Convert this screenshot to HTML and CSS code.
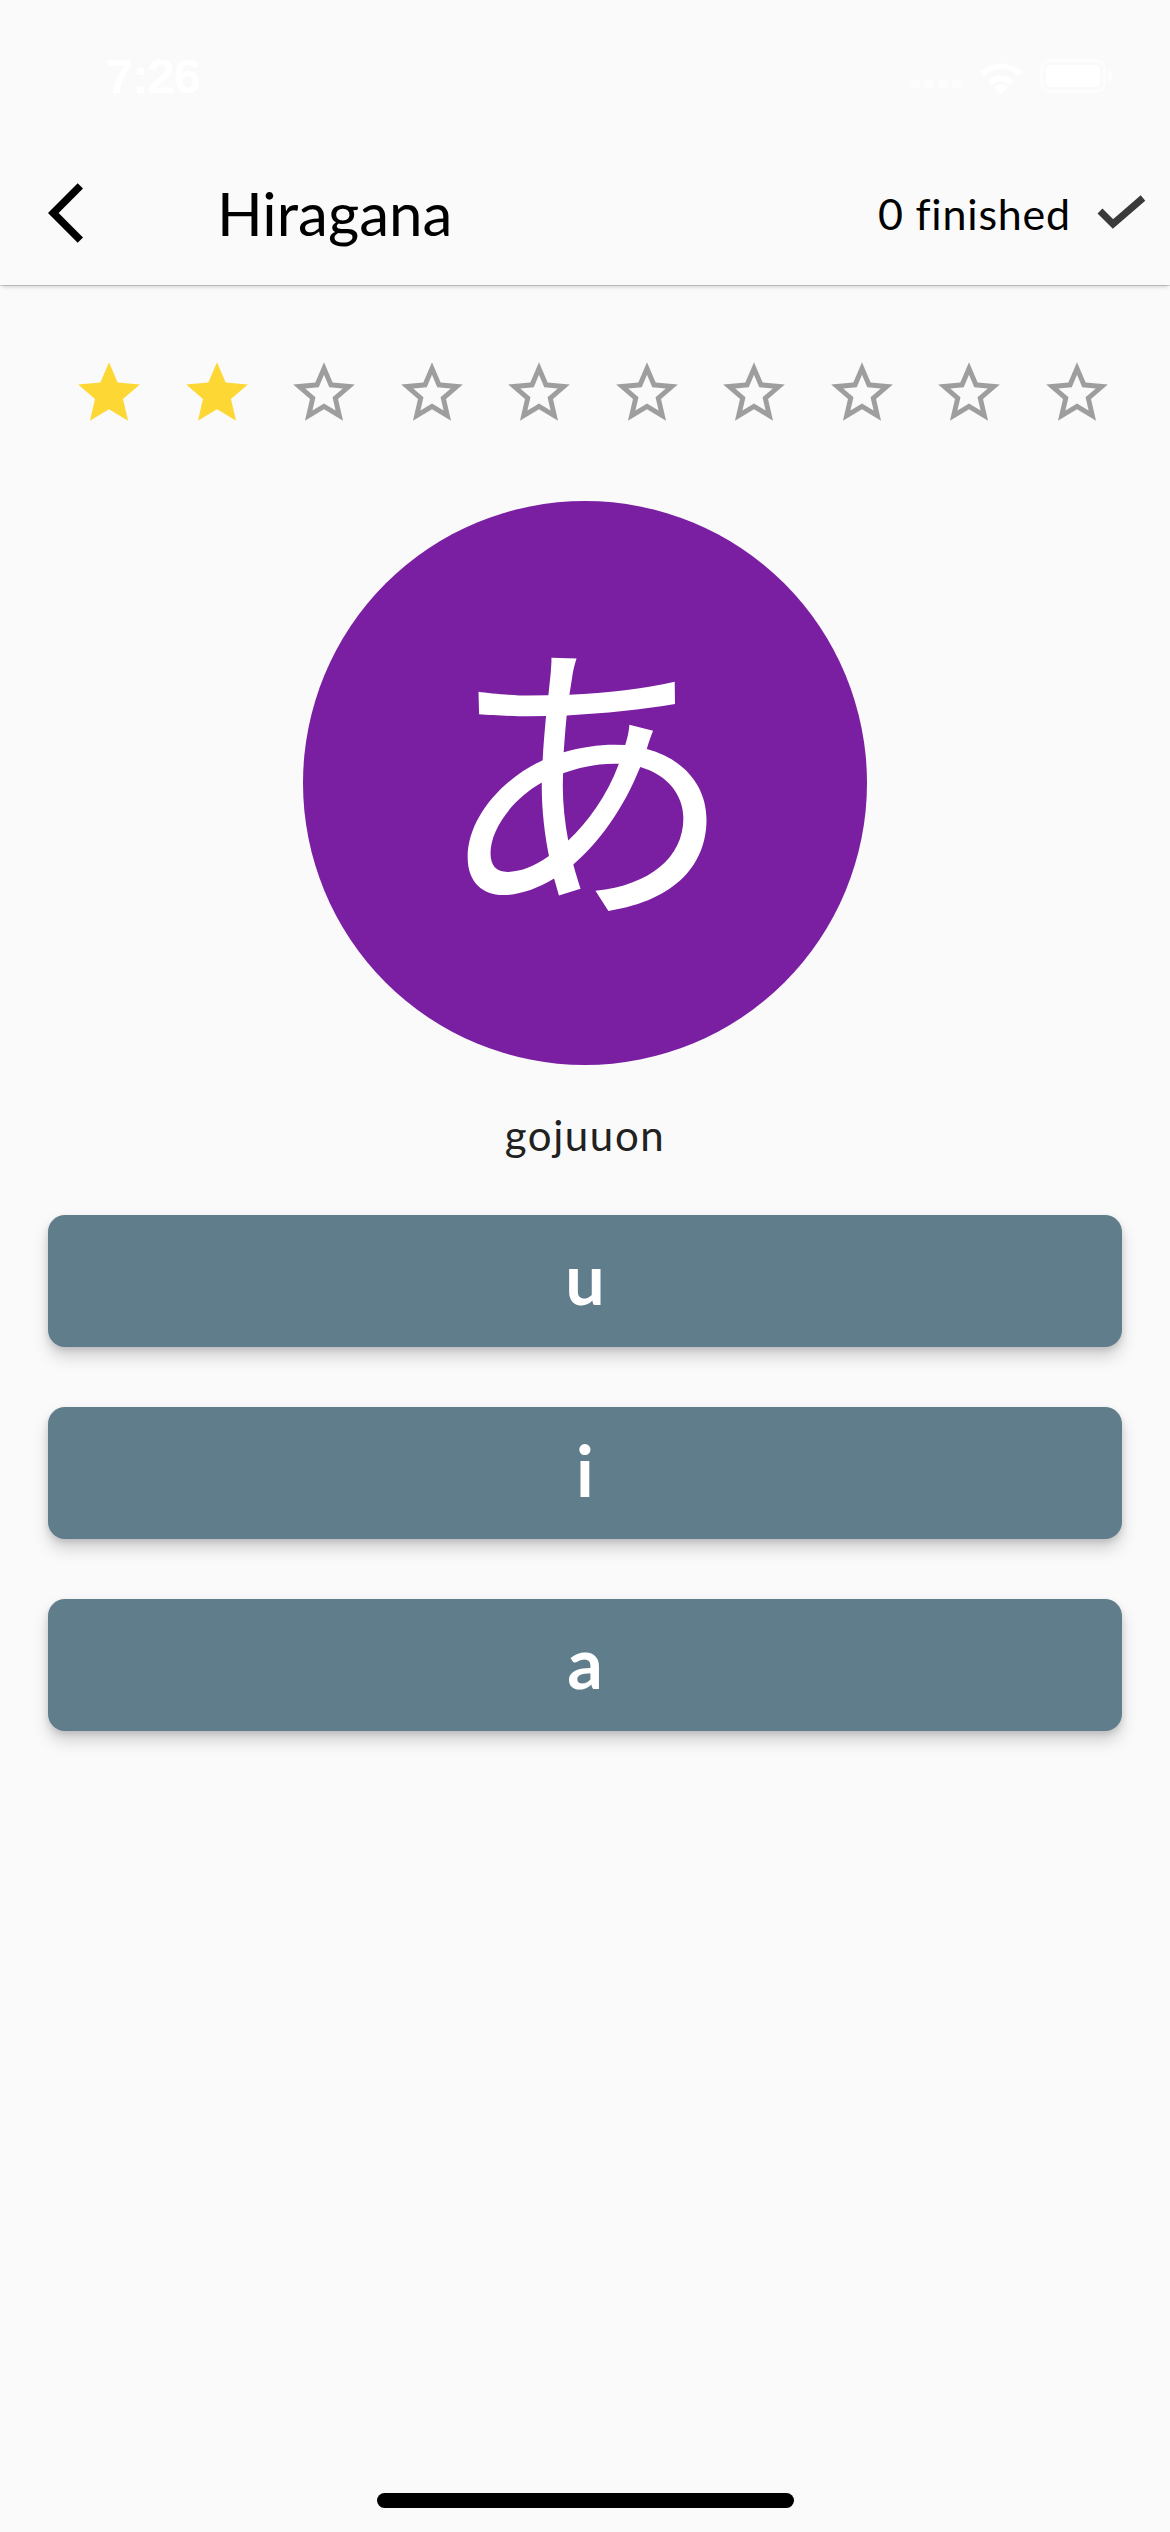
FILE: index.html
```html
<!DOCTYPE html>
<html lang="en">
<head>
<meta charset="utf-8">
<title>Hiragana</title>
<link rel="stylesheet" href="styles.css">
</head>
<body>
<div class="screen">
  <div class="statusbar">
    <span class="time">7:26</span>
    <div class="status-icons">
      <span class="signal"><i></i><i></i><i></i><i></i></span>
      <svg class="wifi" viewBox="0 0 50 36" width="50" height="36">
        <path d="M25 36 L18 29 A10 10 0 0 1 32 29 Z" fill="#fff"/>
        <path d="M12 23 A18 18 0 0 1 38 23 L34 27 A13 13 0 0 0 16 27 Z" fill="#fff"/>
        <path d="M4 14 A30 30 0 0 1 46 14 L42 18 A24 24 0 0 0 8 18 Z" fill="#fff"/>
      </svg>
      <span class="battery"><span class="battery-fill"></span></span>
      <span class="battery-cap"></span>
    </div>
  </div>

  <header class="appbar">
    <svg class="back" viewBox="0 0 24 24" width="72" height="72"><path d="M11.67 3.87L9.9 2.1 0 12l9.9 9.9 1.77-1.77L3.54 12z" fill="#000"/></svg>
    <h1 class="title">Hiragana</h1>
    <div class="finished">
      <span>0 finished</span>
      <svg class="check" viewBox="0 0 50 36" width="50" height="36"><polyline points="3,16 16,29 46,3" fill="none" stroke="#3a3a3a" stroke-width="7"/></svg>
    </div>
  </header>

  <div class="stars">
    <svg class="star" viewBox="0 0 24 24"><path class="full" d="M12 17.27L18.18 21l-1.64-7.03L22 9.24l-7.19-.61L12 2 9.19 8.63 2 9.24l5.46 4.73L5.82 21z"/></svg>
    <svg class="star" viewBox="0 0 24 24"><path class="full" d="M12 17.27L18.18 21l-1.64-7.03L22 9.24l-7.19-.61L12 2 9.19 8.63 2 9.24l5.46 4.73L5.82 21z"/></svg>
    <svg class="star" viewBox="0 0 24 24"><path class="empty" d="M22 9.24l-7.19-.62L12 2 9.19 8.63 2 9.24l5.46 4.73L5.82 21 12 17.27 18.18 21l-1.63-7.03L22 9.24zM12 15.4l-3.76 2.27 1-4.28-3.32-2.88 4.38-.38L12 6.1l1.71 4.04 4.38.38-3.32 2.88 1 4.28L12 15.4z"/></svg>
    <svg class="star" viewBox="0 0 24 24"><path class="empty" d="M22 9.24l-7.19-.62L12 2 9.19 8.63 2 9.24l5.46 4.73L5.82 21 12 17.27 18.18 21l-1.63-7.03L22 9.24zM12 15.4l-3.76 2.27 1-4.28-3.32-2.88 4.38-.38L12 6.1l1.71 4.04 4.38.38-3.32 2.88 1 4.28L12 15.4z"/></svg>
    <svg class="star" viewBox="0 0 24 24"><path class="empty" d="M22 9.24l-7.19-.62L12 2 9.19 8.63 2 9.24l5.46 4.73L5.82 21 12 17.27 18.18 21l-1.63-7.03L22 9.24zM12 15.4l-3.76 2.27 1-4.28-3.32-2.88 4.38-.38L12 6.1l1.71 4.04 4.38.38-3.32 2.88 1 4.28L12 15.4z"/></svg>
    <svg class="star" viewBox="0 0 24 24"><path class="empty" d="M22 9.24l-7.19-.62L12 2 9.19 8.63 2 9.24l5.46 4.73L5.82 21 12 17.27 18.18 21l-1.63-7.03L22 9.24zM12 15.4l-3.76 2.27 1-4.28-3.32-2.88 4.38-.38L12 6.1l1.71 4.04 4.38.38-3.32 2.88 1 4.28L12 15.4z"/></svg>
    <svg class="star" viewBox="0 0 24 24"><path class="empty" d="M22 9.24l-7.19-.62L12 2 9.19 8.63 2 9.24l5.46 4.73L5.82 21 12 17.27 18.18 21l-1.63-7.03L22 9.24zM12 15.4l-3.76 2.27 1-4.28-3.32-2.88 4.38-.38L12 6.1l1.71 4.04 4.38.38-3.32 2.88 1 4.28L12 15.4z"/></svg>
    <svg class="star" viewBox="0 0 24 24"><path class="empty" d="M22 9.24l-7.19-.62L12 2 9.19 8.63 2 9.24l5.46 4.73L5.82 21 12 17.27 18.18 21l-1.63-7.03L22 9.24zM12 15.4l-3.76 2.27 1-4.28-3.32-2.88 4.38-.38L12 6.1l1.71 4.04 4.38.38-3.32 2.88 1 4.28L12 15.4z"/></svg>
    <svg class="star" viewBox="0 0 24 24"><path class="empty" d="M22 9.24l-7.19-.62L12 2 9.19 8.63 2 9.24l5.46 4.73L5.82 21 12 17.27 18.18 21l-1.63-7.03L22 9.24zM12 15.4l-3.76 2.27 1-4.28-3.32-2.88 4.38-.38L12 6.1l1.71 4.04 4.38.38-3.32 2.88 1 4.28L12 15.4z"/></svg>
    <svg class="star" viewBox="0 0 24 24"><path class="empty" d="M22 9.24l-7.19-.62L12 2 9.19 8.63 2 9.24l5.46 4.73L5.82 21 12 17.27 18.18 21l-1.63-7.03L22 9.24zM12 15.4l-3.76 2.27 1-4.28-3.32-2.88 4.38-.38L12 6.1l1.71 4.04 4.38.38-3.32 2.88 1 4.28L12 15.4z"/></svg>
  </div>

  <div class="kana-circle"><span class="kana">あ</span></div>
  <p class="group">gojuuon</p>

  <div class="answers">
    <button class="answer">u</button>
    <button class="answer">i</button>
    <button class="answer">a</button>
  </div>

  <div class="home-indicator"></div>
</div>
</body>
</html>
```

FILE: styles.css
```css
* { box-sizing: border-box; }

html, body {
  margin: 0;
  padding: 0;
  background: #fafafa;
}

.screen {
  width: 1170px;
  min-height: 2532px;
  display: flex;
  flex-direction: column;
  background: #fafafa;
  font-family: Lato, "Noto Sans", sans-serif;
}

.statusbar {
  height: 141px;
  display: flex;
  align-items: flex-start;
  justify-content: space-between;
  padding: 48px 58px 0 106px;
}

.time {
  color: #fff;
  font-family: "Liberation Sans", Arial, sans-serif;
  font-weight: 700;
  font-size: 49px;
  line-height: 56px;
  letter-spacing: -1px;
}

.status-icons {
  display: flex;
  align-items: center;
  gap: 14px;
  height: 56px;
}

.signal {
  display: flex;
  gap: 4px;
  align-items: flex-end;
  margin-top: 16px;
}

.signal i {
  display: block;
  width: 10px;
  height: 8px;
  border-radius: 2px;
  background: rgba(255, 255, 255, 0.6);
}

.wifi { display: block; }

.battery {
  display: flex;
  width: 66px;
  height: 34px;
  border: 3px solid rgba(255, 255, 255, 0.6);
  border-radius: 10px;
  padding: 3px;
}

.battery-fill {
  flex: 1;
  background: #fff;
  border-radius: 5px;
}

.battery-cap {
  width: 4px;
  height: 12px;
  margin-left: -12px;
  border-radius: 0 3px 3px 0;
  background: rgba(255, 255, 255, 0.6);
}

.appbar {
  height: 144px;
  display: flex;
  align-items: center;
  padding: 0 23px 0 48px;
  background: #fafafa;
  box-shadow: 0 1px 0 rgba(0, 0, 0, 0.16), 0 4px 4px -2px rgba(0, 0, 0, 0.16);
  position: relative;
  z-index: 1;
}

.back { display: block; flex: none; }

.title {
  margin: 0 0 0 97px;
  flex: 1;
  font-weight: 400;
  font-size: 60px;
  line-height: 72px;
  color: #000;
}

.finished {
  display: flex;
  align-items: center;
  gap: 26px;
  font-size: 43px;
  color: #000;
  letter-spacing: 0.8px;
}

.check { display: block; }

.stars {
  display: flex;
  gap: 33.5px;
  padding: 71px 0 0 72px;
}

.star {
  width: 74px;
  height: 74px;
  display: block;
  flex: none;
}

.star .full { fill: #fdd835; }
.star .empty { fill: #9e9e9e; }

.kana-circle {
  align-self: center;
  width: 564px;
  height: 564px;
  margin-top: 71px;
  border-radius: 50%;
  background: #7b1fa2;
  display: flex;
  align-items: center;
  justify-content: center;
}

.kana {
  color: #fff;
  font-family: "Noto Sans CJK JP", sans-serif;
  font-size: 300px;
  line-height: 1;
  margin-top: -36px;
}

.group {
  margin: 45px 0 0;
  text-align: center;
  font-size: 42px;
  line-height: 50px;
  letter-spacing: 1.6px;
  color: #212121;
}

.answers {
  display: flex;
  flex-direction: column;
  gap: 60px;
  padding: 0 48px;
  margin-top: 55px;
}

.answer {
  height: 132px;
  border: none;
  border-radius: 17px;
  background: #607d8b;
  color: #fff;
  font-family: Lato, "Noto Sans", sans-serif;
  font-weight: 700;
  font-size: 70px;
  line-height: 1;
  padding: 0 0 6px;
  box-shadow: 0 10px 16px rgba(0, 0, 0, 0.16), 0 3px 6px rgba(0, 0, 0, 0.12);
}

.home-indicator {
  align-self: center;
  margin-top: auto;
  margin-bottom: 24px;
  width: 417px;
  height: 15px;
  border-radius: 8px;
  background: #000;
}
```
